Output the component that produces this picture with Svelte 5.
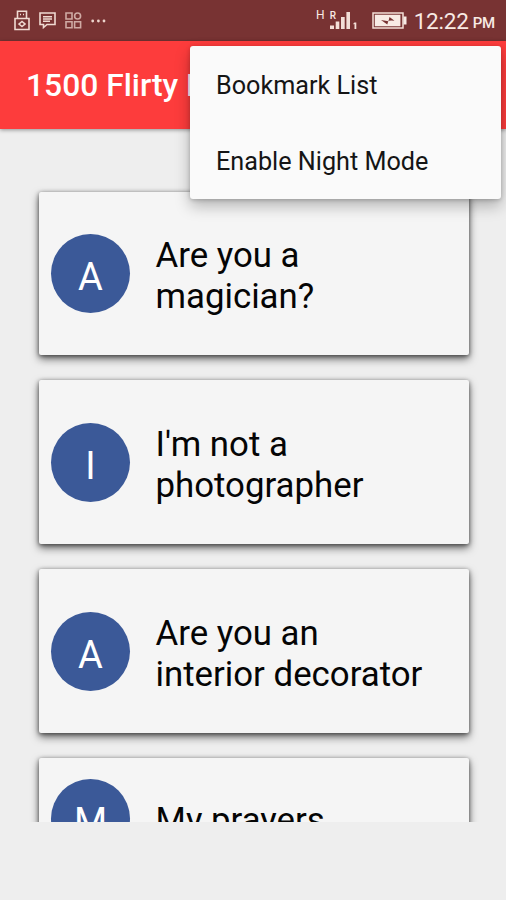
<script lang="ts">
  const menuItems = ['Bookmark List', 'Enable Night Mode'];

  const lines = [
    { letter: 'A', text: 'Are you a magician?' },
    { letter: 'I', text: "I'm not a photographer" },
    { letter: 'A', text: 'Are you an interior decorator' },
    { letter: 'M', text: 'My prayers' }
  ];
</script>

<div class="screen">
  <div class="status-bar">
    <div class="notifications">
      <svg class="lock" width="16" height="21" viewBox="0 0 16 21">
        <path d="M3.5 8V1.2h9V8M1 8.5h14v11H1z" />
        <path d="M6 4.5h1M9 4.5h1M5 14l3-2.5 3 2.5-3 2.5z" />
      </svg>
      <svg class="message" width="17" height="17" viewBox="0 0 17 17">
        <path d="M1 1h15v11.5H8L4.5 15.5v-3H1z" />
        <path d="M4 4.7h9M4 7h9M4 9.3h7" />
      </svg>
      <svg class="apps" width="17" height="17" viewBox="0 0 17 17">
        <path d="M1 1h6v6H1zM1 9.7h6v6H1zM9.6 9.7h6v6h-6z" />
        <circle cx="12.6" cy="4" r="3" />
      </svg>
      <svg class="more" width="15" height="4" viewBox="0 0 15 4">
        <circle cx="1.7" cy="2" r="1.4" />
        <circle cx="7.4" cy="2" r="1.4" />
        <circle cx="13" cy="2" r="1.4" />
      </svg>
    </div>
    <div class="system">
      <span class="network">H</span>
      <span class="signal">
        <span class="roaming">R</span>
        <svg width="28" height="19" viewBox="0 0 28 19">
          <path d="M0 14.5h4V18H0zM5.7 10.5h3.6V18H5.7zM11 6h3.7v12H11zM16.4 1H20v17h-3.6z" />
          <path d="M24.5 11.5h1.8V18h-1.8v-5l-1 .5v-1.2z" />
        </svg>
      </span>
      <svg class="battery" width="35" height="17" viewBox="0 0 35 17">
        <path class="case" d="M1 1h30v15H1z" />
        <path class="charge" d="M2.8 2.8h25.6v11.4H2.8zM31.5 4.5h3v8h-3z" />
        <path class="bolt" d="m9 8 7.5 1.2L17.5 5l5 3.8-6-.5-1.2 4.3z" />
      </svg>
      <span class="time">12:22</span>
      <span class="period">PM</span>
    </div>
  </div>

  <header class="toolbar">
    <h1>1500 Flirty Lines</h1>
  </header>

  <main class="list">
    {#each lines as line}
      <article class="card">
        <span class="avatar">{line.letter}</span>
        <p>{line.text}</p>
      </article>
    {/each}
  </main>

  <div class="menu">
    {#each menuItems as item}
      <button>{item}</button>
    {/each}
  </div>
</div>

<style>
  :global(body) {
    background: #eeeeee;
  }

  .screen {
    position: relative;
    display: flex;
    flex-direction: column;
    width: 506px;
    height: 900px;
    overflow: hidden;
    background: #eeeeee;
    font-family: Roboto, "Liberation Sans", sans-serif;
  }

  .status-bar {
    display: flex;
    flex: none;
    justify-content: space-between;
    align-items: center;
    box-sizing: border-box;
    height: 41px;
    padding: 0 11px 0 14px;
    background: #783333;
    color: #f8eae4;
  }

  .notifications,
  .system {
    display: flex;
    align-items: center;
  }

  .notifications svg {
    fill: none;
    stroke: #f0dad2;
    stroke-width: 1.6;
  }

  .message {
    margin-left: 9px;
  }

  .notifications .apps {
    margin-left: 9px;
    stroke: #cfaaa4;
  }

  .notifications .more {
    margin-left: 9px;
    fill: #edd5cd;
    stroke: none;
  }

  .network {
    margin: -11px 5px 0 0;
    font-size: 12px;
  }

  .signal {
    position: relative;
    display: flex;
    margin-right: 14px;
    fill: #f3dfd7;
  }

  .roaming {
    position: absolute;
    top: 0;
    left: 0;
    font-size: 10px;
    font-weight: 500;
    line-height: 10px;
  }

  .case {
    fill: none;
    stroke: #f3dfd7;
    stroke-width: 1.5;
  }

  .charge {
    fill: #f8ebe5;
  }

  .bolt {
    fill: #783333;
  }

  .time {
    margin-left: 7px;
    font-size: 22.5px;
    letter-spacing: -0.2px;
  }

  .period {
    margin: 4px 0 0 4px;
    font-size: 15px;
    font-weight: 500;
    letter-spacing: -0.2px;
  }

  .toolbar {
    z-index: 1;
    display: flex;
    flex: none;
    align-items: center;
    height: 88px;
    padding-left: 26px;
    background: #fd3c3c;
    box-shadow: 0 1px 4px rgba(0, 0, 0, 0.4);
  }

  h1 {
    margin: 0;
    color: #fff;
    font-size: 31.8px;
    font-weight: 500;
    white-space: nowrap;
  }

  .list {
    display: flex;
    flex: none;
    flex-direction: column;
    gap: 25px;
    box-sizing: border-box;
    height: 693px;
    padding: 62.6px 37.5px 0 38.5px;
    overflow: hidden;
  }

  .card {
    display: flex;
    flex: none;
    align-items: center;
    box-sizing: border-box;
    height: 163.8px;
    padding: 0 40px 0 12px;
    border-radius: 2px;
    background: #f5f5f5;
    box-shadow:
      0 4px 8px rgba(0, 0, 0, 0.55),
      0 1px 4px rgba(0, 0, 0, 0.5);
  }

  .card:last-child {
    height: 121px;
  }

  .avatar {
    display: flex;
    flex: none;
    justify-content: center;
    align-items: center;
    box-sizing: border-box;
    width: 79px;
    height: 79px;
    padding: 7px 0 0 1px;
    border-radius: 50%;
    background: #3b5998;
    color: #fff;
    font-size: 38px;
  }

  .card p {
    margin: 5px 0 0 26px;
    color: #050505;
    font-size: 34.8px;
    line-height: 41px;
  }

  .menu {
    position: absolute;
    top: 46px;
    right: 5.5px;
    z-index: 2;
    display: flex;
    flex-direction: column;
    width: 310.5px;
    border-radius: 3px;
    background: #fafafa;
    box-shadow:
      0 7px 15px rgba(0, 0, 0, 0.27),
      0 1px 4px rgba(0, 0, 0, 0.2);
  }

  .menu button {
    height: 76.3px;
    padding: 2px 26px 0;
    border: none;
    background: none;
    color: #151515;
    font: inherit;
    font-size: 25.2px;
    text-align: left;
  }
</style>
